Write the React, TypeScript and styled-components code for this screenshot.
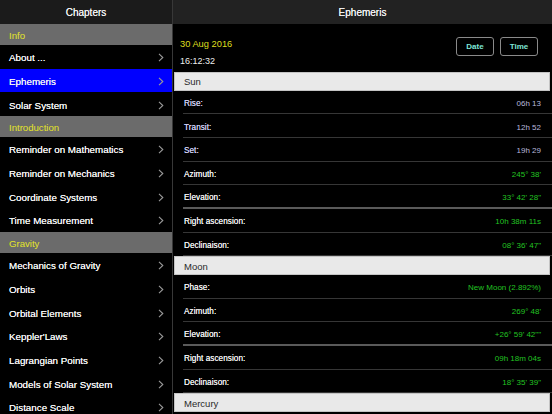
import React from "react";
import styled, { createGlobalStyle } from "styled-components";

const GlobalStyle = createGlobalStyle`
  html, body {
    margin: 0;
    padding: 0;
    background: #000;
  }
  body {
    font-family: "Liberation Sans", Arial, sans-serif;
    -webkit-font-smoothing: antialiased;
  }
  * {
    box-sizing: border-box;
  }
`;

const Screen = styled.div`
  display: flex;
  width: 552px;
  height: 414px;
  overflow: hidden;
  background: #000;
`;

const Sidebar = styled.div`
  width: 173px;
  flex-shrink: 0;
  display: flex;
  flex-direction: column;
  border-right: 1px solid #383838;
`;

const Main = styled.div`
  flex: 1;
  display: flex;
  flex-direction: column;
  min-width: 0;
`;

const NavBar = styled.div<{ $shade: string }>`
  height: 24px;
  flex-shrink: 0;
  display: flex;
  align-items: center;
  justify-content: center;
  padding-top: 1px;
  background: ${(p) => p.$shade};
  color: #f2f2f2;
  font-size: 10px;
  text-shadow: 0 0 0.3px currentColor;
`;

const SectionRow = styled.div`
  height: 21px;
  flex-shrink: 0;
  display: flex;
  align-items: center;
  padding: 2px 0 0 9px;
  background: #6b6b6b;
  color: #e4e42a;
  font-size: 9.6px;
`;

const ChapterRow = styled.div<{ $active?: boolean }>`
  height: 23.7px;
  flex-shrink: 0;
  display: flex;
  align-items: center;
  justify-content: space-between;
  padding: 2px 8px 0 9px;
  background: ${(p) => (p.$active ? "#0000ff" : "#000")};
  color: #f4f4f4;
  font-size: 9.8px;
  text-shadow: 0 0 0.3px currentColor;
`;

const Chevron = styled.svg`
  width: 6px;
  height: 9px;
  flex-shrink: 0;
`;

const TopArea = styled.div`
  display: flex;
  justify-content: space-between;
  align-items: flex-start;
  padding: 12px 14px 3px 7px;
`;

const DateCol = styled.div`
  display: flex;
  flex-direction: column;
`;

const DateText = styled.div`
  height: 16px;
  line-height: 16px;
  color: #dede1e;
  font-size: 9.3px;
`;

const TimeText = styled.div`
  height: 16px;
  line-height: 16px;
  margin-top: 1px;
  color: #eeeeee;
  font-size: 9px;
`;

const Buttons = styled.div`
  display: flex;
  gap: 6px;
  margin-top: 1px;
`;

const PillButton = styled.div`
  width: 38px;
  height: 19px;
  display: flex;
  align-items: center;
  justify-content: center;
  border: 1px solid #8a8a8a;
  border-radius: 3px;
  color: #7ee6d6;
  font-size: 8px;
  font-weight: 700;
`;

const BodyHeader = styled.div`
  height: 18.5px;
  flex-shrink: 0;
  display: flex;
  align-items: center;
  margin: 0 2px 0 1px;
  padding: 1px 0 0 9px;
  background: #e9e9e9;
  border: 1px solid #c4c4c4;
  color: #2a2a2a;
  font-size: 9.5px;
`;

const DataRow = styled.div<{ $strong?: boolean }>`
  height: 23.7px;
  flex-shrink: 0;
  display: flex;
  align-items: center;
  justify-content: space-between;
  margin-left: 10px;
  padding: 3px 11px 0 1px;
  border-bottom: ${(p) => (p.$strong ? "2px solid #5a5a5a" : "1px solid #363636")};
  font-size: 8px;
`;

const Label = styled.span<{ $tone: "sky" | "plain" }>`
  font-size: 8.2px;
  letter-spacing: 0.05px;
  color: ${(p) => (p.$tone === "sky" ? "#cdcdf4" : "#f0f0f0")};
  text-shadow: 0 0 0.5px currentColor;
`;

const Value = styled.span<{ $tone: "sky" | "green" }>`
  color: ${(p) => (p.$tone === "sky" ? "#b8b8dc" : "#22c322")};
`;

type Chapter = { kind: "section" | "item"; title: string; active?: boolean };

const chapters: Chapter[] = [
  { kind: "section", title: "Info" },
  { kind: "item", title: "About ..." },
  { kind: "item", title: "Ephemeris", active: true },
  { kind: "item", title: "Solar System" },
  { kind: "section", title: "Introduction" },
  { kind: "item", title: "Reminder on Mathematics" },
  { kind: "item", title: "Reminder on Mechanics" },
  { kind: "item", title: "Coordinate Systems" },
  { kind: "item", title: "Time Measurement" },
  { kind: "section", title: "Gravity" },
  { kind: "item", title: "Mechanics of Gravity" },
  { kind: "item", title: "Orbits" },
  { kind: "item", title: "Orbital Elements" },
  { kind: "item", title: "Keppler'Laws" },
  { kind: "item", title: "Lagrangian Points" },
  { kind: "item", title: "Models of Solar System" },
  { kind: "item", title: "Distance Scale" },
];

type Datum = { label: string; value: string; sky?: boolean; strong?: boolean };

const bodies: { name: string; rows: Datum[] }[] = [
  {
    name: "Sun",
    rows: [
      { label: "Rise:", value: "06h 13", sky: true },
      { label: "Transit:", value: "12h 52", sky: true },
      { label: "Set:", value: "19h 29", sky: true },
      { label: "Azimuth:", value: "245° 38'" },
      { label: "Elevation:", value: "33° 42' 28\"", strong: true },
      { label: "Right ascension:", value: "10h 38m 11s" },
      { label: "Declinaison:", value: "08° 36' 47\"" },
    ],
  },
  {
    name: "Moon",
    rows: [
      { label: "Phase:", value: "New Moon (2.892%)" },
      { label: "Azimuth:", value: "269° 48'" },
      { label: "Elevation:", value: "+26° 59' 42\"\"", strong: true },
      { label: "Right ascension:", value: "09h 18m 04s" },
      { label: "Declinaison:", value: "18° 35' 39\"" },
    ],
  },
  { name: "Mercury", rows: [] },
];

function ChevronIcon() {
  return (
    <Chevron viewBox="0 0 6 9">
      <polyline
        points="1,0.8 4.8,4.5 1,8.2"
        fill="none"
        stroke="#9a9a9a"
        strokeWidth="1.1"
      />
    </Chevron>
  );
}

export default function App() {
  return (
    <>
      <GlobalStyle />
      <Screen>
        <Sidebar>
          <NavBar $shade="#1b1b1b">Chapters</NavBar>
          {chapters.map((c) =>
            c.kind === "section" ? (
              <SectionRow key={c.title}>{c.title}</SectionRow>
            ) : (
              <ChapterRow key={c.title} $active={c.active}>
                <span>{c.title}</span>
                <ChevronIcon />
              </ChapterRow>
            )
          )}
        </Sidebar>
        <Main>
          <NavBar $shade="#222222">Ephemeris</NavBar>
          <TopArea>
            <DateCol>
              <DateText>30 Aug 2016</DateText>
              <TimeText>16:12:32</TimeText>
            </DateCol>
            <Buttons>
              <PillButton>Date</PillButton>
              <PillButton>Time</PillButton>
            </Buttons>
          </TopArea>
          {bodies.map((b) => (
            <React.Fragment key={b.name}>
              <BodyHeader>{b.name}</BodyHeader>
              {b.rows.map((r) => (
                <DataRow key={b.name + r.label} $strong={r.strong}>
                  <Label $tone={r.sky ? "sky" : "plain"}>{r.label}</Label>
                  <Value $tone={r.sky ? "sky" : "green"}>{r.value}</Value>
                </DataRow>
              ))}
            </React.Fragment>
          ))}
        </Main>
      </Screen>
    </>
  );
}
